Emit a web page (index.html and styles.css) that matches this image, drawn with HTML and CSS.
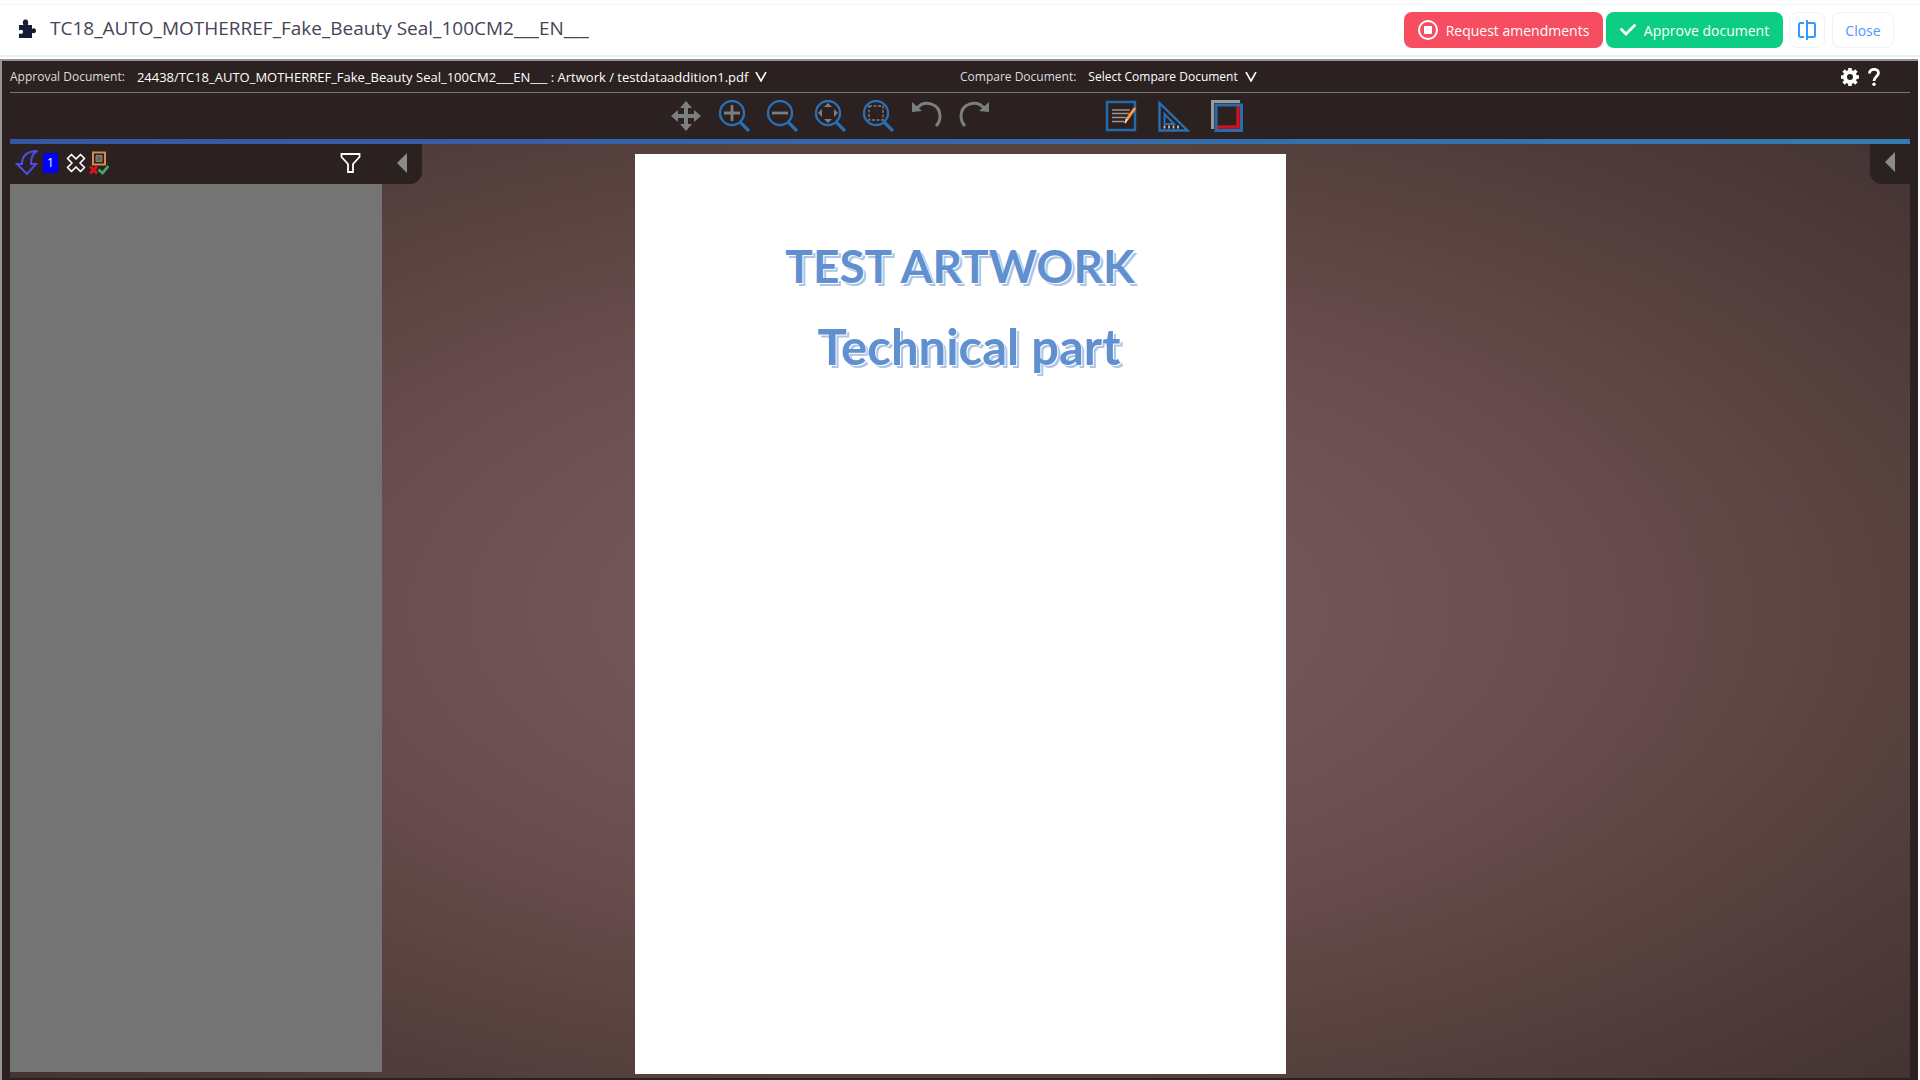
FILE: index.html
```html
<!DOCTYPE html>
<html lang="en">
<head>
<meta charset="utf-8">
<title>Document approval</title>
<link rel="stylesheet" href="styles.css">
</head>
<body>
<header class="header">
  <svg class="puzzle" viewBox="0 0 18 20" aria-hidden="true"><path d="M1 6h4.500C4 3 5 .5 7.500.5S11 3 9.700 6H14v4c2-1.500 4-.5 4 1.800s-2 3.200-4 2V19H9.500H1v-4.500c3 1 4-.2 4-2s-2-2.500-4-1z"/></svg>
  <h1 class="title">TC18_AUTO_MOTHERREF_Fake_Beauty Seal_100CM2___EN___</h1>
  <div class="actions">
    <button class="btn btn-reject"><svg width="20" height="20" viewBox="0 0 20 20"><circle cx="10" cy="10" r="9" fill="none" stroke="#fff" stroke-width="2"/><rect x="6" y="6" width="8" height="8" rx="1" fill="#fff"/></svg>Request amendments</button>
    <button class="btn btn-approve"><svg width="16" height="12" viewBox="0 0 16 12"><path d="M1.500 5.500l4.500 4.500L14.500 1.500" fill="none" stroke="#fff" stroke-width="2.800" stroke-linecap="round"/></svg>Approve document</button>
    <button class="btn btn-split" aria-label="Split view"><svg width="18" height="20" viewBox="0 0 18 20" fill="none" stroke="#3699ff" stroke-width="2"><path d="M6 3H2.500Q1 3 1 4.500v11Q1 17 2.500 17H6M9 0v20M9 3h6.500Q17 3 17 4.500v11q0 1.500-1.500 1.500H9"/></svg></button>
    <button class="btn btn-close">Close</button>
  </div>
</header>
<main class="viewer">
  <div class="documents">
    <div class="doc"><span>Approval Document:</span><button class="pick pick-main">24438/TC18_AUTO_MOTHERREF_Fake_Beauty Seal_100CM2___EN___ : Artwork / testdataaddition1.pdf<svg width="12" height="10" viewBox="0 0 12 10"><path d="M1 0l5 9 5-9" fill="none" stroke="#fff" stroke-width="1.600"/></svg></button></div>
    <div class="doc"><span>Compare Document:</span><button class="pick">Select Compare Document<svg width="12" height="10" viewBox="0 0 12 10"><path d="M1 0l5 9 5-9" fill="none" stroke="#fff" stroke-width="1.600"/></svg></button>
      <div class="tools-end">
        <button class="icon" aria-label="Settings"><svg width="18" height="18" viewBox="0 0 18 18"><circle cx="9" cy="9" r="5" fill="none" stroke="#fff" stroke-width="4"/><path d="M9 0v3M9 15v3M0 9h3M15 9h3M2.600 2.600l2 2M13.400 13.400l2 2M2.600 15.400l2-2M13.400 4.600l2-2" stroke="#fff" stroke-width="3.600"/></svg></button>
        <button class="icon" aria-label="Help"><svg width="12" height="18" viewBox="0 0 12 18"><path d="M1.500 5.500C1.500 0 10.500 0 10.500 5c0 3.500-4.500 3.500-4.500 8" fill="none" stroke="#fff" stroke-width="2.800"/><circle cx="6" cy="16.300" r="1.700" fill="#fff"/></svg></button>
      </div>
    </div>
  </div>
  <div class="toolbar">
    <div class="group nav">
      <button class="icon" aria-label="Pan"><svg width="32" height="32" viewBox="0 0 32 32"><path d="M16 1l6 7h-4v6h6v-4l7 6-7 6v-4h-6v6h4l-6 7-6-7h4v-6H8v4l-7-6 7-6v4h6V8h-4z" fill="#7c7f80"/></svg></button>
      <button class="icon" aria-label="Zoom in"><svg width="32" height="32" viewBox="0 0 32 32" fill="none"><circle cx="14" cy="13" r="12" stroke="#286fb3" stroke-width="2.400"/><path d="M22 22l9 9" stroke="#286fb3" stroke-width="3.200"/><path d="M14 5v16M6 13h16" stroke="#7c7f80" stroke-width="2.800"/></svg></button>
      <button class="icon" aria-label="Zoom out"><svg width="32" height="32" viewBox="0 0 32 32" fill="none"><circle cx="14" cy="13" r="12" stroke="#286fb3" stroke-width="2.400"/><path d="M22 22l9 9" stroke="#286fb3" stroke-width="3.200"/><path d="M6 13h16" stroke="#7c7f80" stroke-width="2.800"/></svg></button>
      <button class="icon" aria-label="Fit to page"><svg width="32" height="32" viewBox="0 0 32 32" fill="none"><circle cx="14" cy="13" r="12" stroke="#286fb3" stroke-width="2.400"/><path d="M22 22l9 9" stroke="#286fb3" stroke-width="3.200"/><path d="M14 3l4 4h-8zM14 23l4-4h-8zM4 13l4-4v8zM24 13l-4-4v8z" fill="#7c7f80"/></svg></button>
      <button class="icon" aria-label="Zoom to area"><svg width="32" height="32" viewBox="0 0 32 32" fill="none"><circle cx="14" cy="13" r="12" stroke="#286fb3" stroke-width="2.400"/><path d="M22 22l9 9" stroke="#286fb3" stroke-width="3.200"/><path d="M7 6h14v14H7z" stroke="#7c7f80" stroke-width="1.400" stroke-dasharray="3 1.500"/></svg></button>
      <button class="icon" aria-label="Undo"><svg width="32" height="32" viewBox="0 0 32 32"><path d="M7 8C15-1 30 4 30 16q0 6-4 10" fill="none" stroke="#7c7f80" stroke-width="3"/><path d="M2 2v10l10-1z" fill="#7c7f80"/></svg></button>
      <button class="icon" aria-label="Redo"><svg width="32" height="32" viewBox="0 0 32 32"><path d="M26 8C18-1 3 4 3 16q0 6 4 10" fill="none" stroke="#7c7f80" stroke-width="3"/><path d="M31 2v10l-10-1z" fill="#7c7f80"/></svg></button>
    </div>
    <div class="group marks">
      <button class="icon" aria-label="Annotate"><svg width="32" height="32" viewBox="0 0 32 32" fill="none"><path d="M2 2h28v28H2z" stroke="#1f6cb0" stroke-width="2.400"/><path d="M7 10h18M7 13.500h17M7 17.500h14M7 21.500h12" stroke="#9a9494" stroke-width="1.400"/><path d="M30 8l-8.500 12" stroke="#ff9a3c" stroke-width="3"/><path d="M22 19l-2 4" stroke="#ffd2a0" stroke-width="2"/></svg></button>
      <button class="icon" aria-label="Measure"><svg width="32" height="32" viewBox="0 0 32 32" fill="none" stroke="#286fb3" stroke-width="2.400"><path d="M1.500 3v27.500h28z"/><path d="M6.500 14v10H16z" stroke-width="2"/><path d="M6.500 28.500v-3M11 28.500v-3M15.500 28.500v-3M20 28.500v-3" stroke="#c8bcbc" stroke-width="1.800"/></svg></button>
      <button class="icon" aria-label="Compare"><svg width="32" height="32" viewBox="0 0 32 32" fill="none"><path d="M29 1.500H1.500V29" stroke="#999a9a" stroke-width="3"/><path d="M27 6v21H6" stroke="#c8141e" stroke-width="3.500"/><path d="M5 5h25.500v25.500H5z" stroke="#2a6cab" stroke-width="3"/></svg></button>
    </div>
  </div>
  <div class="canvas">
    <aside class="side">
      <div class="side-bar">
        <button class="icon" aria-label="Sort"><svg width="24" height="26" viewBox="0 0 24 26"><path d="M22.500 1C17 3 16 8 16 14h5l-9 10L2 14h5C7 5 12 1 22.500 1z" fill="none" stroke="#4f4be8" stroke-width="2"/></svg></button>
        <span class="count">1</span>
        <button class="icon" aria-label="Clear"><svg width="20" height="20" viewBox="0 0 20 20"><path d="M5.500 1.500L10 6l4.500-4.500 4 4L14 10l4.500 4.500-4 4L10 14l-4.500 4.500-4-4L6 10 1.500 5.500z" fill="none" stroke="#fff" stroke-width="1.700" stroke-linejoin="round"/></svg></button>
        <button class="icon" aria-label="Review state"><svg width="20" height="24" viewBox="0 0 20 24" fill="none"><path d="M4 1.500h12v12H4z" stroke="#d98a45" stroke-width="2"/><path d="M7 4.500h6v6H7z" fill="#666" stroke="#888"/><path d="M1 15.500l7 7M8 15.500l-7 7" stroke="#d9141e" stroke-width="3"/><path d="M9.500 18.500l4 3.500 6-7" stroke="#42a66c" stroke-width="2.800"/></svg></button>
        <button class="icon filter" aria-label="Filter"><svg width="22" height="20" viewBox="0 0 22 20"><path d="M1.500 1h18v3l-6.500 7v8H8v-8L1.500 4z" fill="none" stroke="#fff" stroke-width="1.800"/></svg></button>
        <button class="icon fold" aria-label="Collapse comments"><svg width="10" height="20" viewBox="0 0 10 20"><path d="M10 0v20L0 10z" fill="#8b8b8b"/></svg></button>
      </div>
      <div class="comments"></div>
    </aside>
    <article class="page">
      <p>TEST ARTWORK</p>
      <p class="part">Technical part</p>
    </article>
    <div class="right"><button class="tab" aria-label="Expand panel"><svg width="10" height="20" viewBox="0 0 10 20"><path d="M10 0v20L0 10z" fill="#8b8b8b"/></svg></button></div>
  </div>
</main>
</body>
</html>
```
FILE: styles.css
```css
* { box-sizing: border-box; }
body {
  margin: 0;
  min-height: 100vh;
  display: flex;
  flex-direction: column;
  font-family: "Open Sans", sans-serif;
  background: #fff;
}
button { border: 0; padding: 0; background: none; font: inherit; color: inherit; }
svg { display: block; }

.header {
  height: 53px;
  margin: 4px 0 2px;
  padding: 0 26px 0 18px;
  display: flex;
  align-items: center;
  border-top: 1px solid #f3f6fb;
  border-bottom: 2px solid #ebeff8;
}
.puzzle { width: 18px; height: 20px; margin-bottom: 2px; fill: #181c32; }
.title { margin: 0 0 4px 14px; font-size: 19px; font-weight: 400; line-height: 24px; color: #464457; }
.actions { margin-left: auto; display: flex; }
.btn {
  height: 36px;
  display: flex;
  align-items: center;
  justify-content: center;
  gap: 8px;
  border-radius: 8px;
  font-size: 14px;
  font-weight: 500;
  color: #fff;
}
.btn-reject { width: 199px; background: #f64e60; }
.btn-approve { width: 177px; margin-left: 3px; background: #0bce83; }
.btn-split { width: 36px; margin-left: 6px; border: 1px solid #f0f1f4; }
.btn-close { width: 62px; margin-left: 7px; border: 1px solid #f0f1f4; color: #5297ff; }

.viewer {
  flex: 1;
  margin-right: 2px;
  padding: 0 8px 2px;
  display: flex;
  flex-direction: column;
  background: #2b2121;
  border-top: 2px solid #949494;
  border-left: 2px solid #949494;
}
.documents {
  height: 32px;
  display: grid;
  grid-template-columns: 1fr 1fr;
  border-bottom: 1px solid #7b7777;
  font-size: 12px;
}
.doc { display: flex; align-items: center; gap: 12px; color: #ddd; }
.pick { display: flex; align-items: center; gap: 7px; font-weight: 500; color: #fff; white-space: nowrap; }
.pick-main { font-size: 13px; }
.tools-end { margin-left: auto; padding-right: 30px; display: flex; gap: 9px; }

.toolbar {
  height: 51px;
  padding-right: 7px;
  display: flex;
  align-items: center;
  justify-content: center;
  gap: 115px;
  border-bottom: 5px solid;
  border-image: linear-gradient(90deg, #3855a5, #347bb1) 1;
}
.group { display: flex; gap: 16px; }
.marks { gap: 21px; }

.canvas {
  flex: 1;
  display: grid;
  grid-template-columns: 1fr 651px 1fr;
  background: radial-gradient(ellipse at center, #7d5e60 0%, #6a4e4f 45%, #57423f 70%, #433333 100%);
}
.side { display: flex; flex-direction: column; align-items: flex-start; padding-bottom: 6px; }
.side-bar {
  width: 412px;
  height: 40px;
  padding: 0 15px 2px 5px;
  display: flex;
  align-items: center;
  background: #2b2121;
  border-radius: 0 0 12px 0;
}
.count { width: 15px; margin: 0 8px 0 4px; line-height: 20px; text-align: center; font-size: 12px; color: #fff; background: #00f; }
.side-bar .icon + .icon { margin-left: 3px; }
.side-bar .filter.icon { margin-left: auto; }
.side-bar .fold.icon { margin-left: 35px; }
.comments { flex: 1; width: 372px; background: #747474; }
.page {
  margin: 10px 0 4px;
  padding-top: 79px;
  background: #fff;
  text-align: center;
  font-family: Lato, sans-serif;
  font-size: 46px;
  font-weight: 700;
  line-height: 66px;
  color: #6090d0;
  text-shadow: 1px 1px 0 #fff, 3px 3px 0 #adc4e6;
}
.page p { margin: 0 0 14px; }
.page .part { padding-left: 18px; font-size: 49px; }
.right { display: flex; justify-content: flex-end; align-items: flex-start; }
.tab {
  width: 40px;
  height: 40px;
  padding: 0 15px 4px;
  background: #2b2121;
  border-radius: 0 0 0 12px;
}
```
